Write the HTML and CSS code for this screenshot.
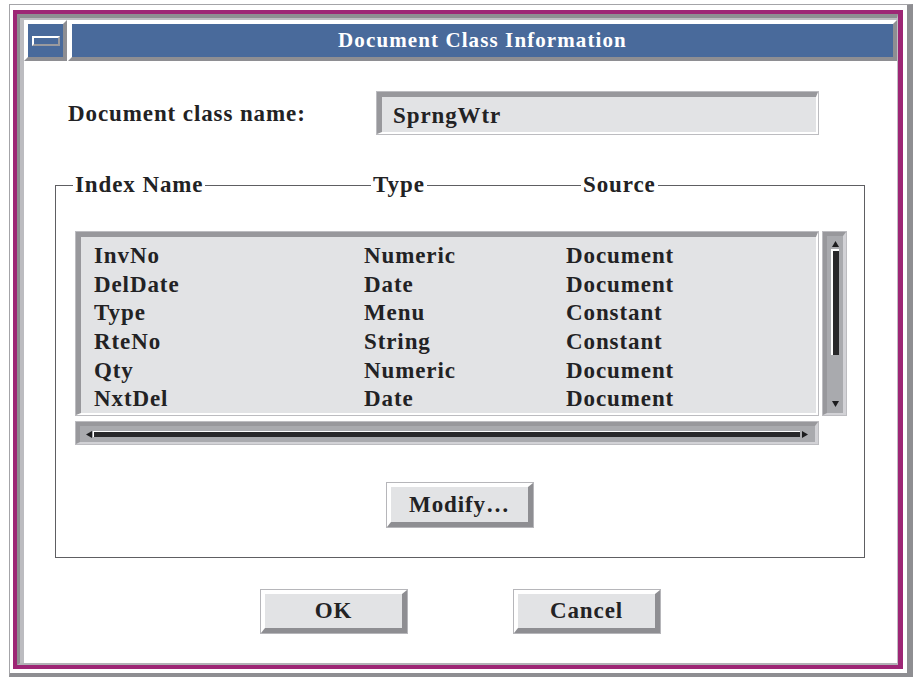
FILE: index.html
```html
<!DOCTYPE html>
<html lang="en">
<head>
<meta charset="utf-8">
<title>Document Class Information</title>
<link rel="stylesheet" href="styles.css">
</head>
<body>
<div class="screen">
  <div class="win">
    <div class="rim-white">
      <div class="rim-mag">
        <div class="rim-shade">
          <div class="rim-light">
            <div class="client">
              <header class="titlebar">
                <div class="menu-btn"><span class="menu-glyph"></span></div>
                <div class="title">Document Class Information</div>
              </header>

              <main class="content">
                <div class="name-row">
                  <span class="name-label">Document class name:</span>
                  <div class="field">SprngWtr</div>
                </div>

                <section class="group">
                  <div class="legend">
                    <div class="slot slot-name"><span>Index Name</span></div>
                    <div class="slot slot-type"><span>Type</span></div>
                    <div class="slot slot-src"><span>Source</span></div>
                  </div>

                  <div class="list-wrap">
                    <div class="list-line">
                      <div class="list">
                        <div class="row"><span>InvNo</span><span>Numeric</span><span>Document</span></div>
                        <div class="row"><span>DelDate</span><span>Date</span><span>Document</span></div>
                        <div class="row"><span>Type</span><span>Menu</span><span>Constant</span></div>
                        <div class="row"><span>RteNo</span><span>String</span><span>Constant</span></div>
                        <div class="row"><span>Qty</span><span>Numeric</span><span>Document</span></div>
                        <div class="row"><span>NxtDel</span><span>Date</span><span>Document</span></div>
                      </div>
                      <div class="vscroll">
                        <svg class="arrow" width="7" height="6" viewBox="0 0 7 6"><polygon points="3.5,0 7,6 0,6"/></svg>
                        <div class="vthumb"></div>
                        <svg class="arrow arrow-down" width="7" height="6" viewBox="0 0 7 6"><polygon points="0,0 7,0 3.5,6"/></svg>
                      </div>
                    </div>
                    <div class="hscroll">
                      <svg class="arrow" width="6" height="7" viewBox="0 0 6 7"><polygon points="0,3.5 6,0 6,7"/></svg>
                      <div class="hthumb"></div>
                      <svg class="arrow" width="6" height="7" viewBox="0 0 6 7"><polygon points="0,0 6,3.5 0,7"/></svg>
                    </div>
                  </div>

                  <div class="modify-line">
                    <button class="btn btn-modify" type="button">Modify…</button>
                  </div>
                </section>

                <div class="actions">
                  <button class="btn btn-ok" type="button">OK</button>
                  <button class="btn btn-cancel" type="button">Cancel</button>
                </div>
              </main>
            </div>
          </div>
        </div>
      </div>
    </div>
  </div>
</div>
</body>
</html>
```

FILE: styles.css
```css
* {
  box-sizing: border-box;
}

html, body {
  margin: 0;
  background: #ffffff;
}

body {
  font-family: "Liberation Serif", "Times New Roman", serif;
  font-weight: bold;
  font-size: 23px;
  letter-spacing: 0.9px;
  color: #222224;
}

.screen {
  width: 913px;
  height: 677px;
  padding: 4px 0 0 9px;
  overflow: hidden;
}

/* ---- window frame: nested bevel rims ---- */
.win {
  width: 904px;
  height: 673px;
  border-style: solid;
  border-width: 1px 6px 4px 1px;
  border-color: #a4a4a8 #8e8e92 #8e8e92 #a4a4a8;
  background: #ffffff;
}

.rim-white,
.rim-mag,
.rim-shade,
.rim-light,
.client {
  height: 100%;
}

.rim-white {
  border-style: solid;
  border-color: #ffffff;
  border-width: 5px 4px 4px 3px;
}

.rim-mag {
  border-style: solid;
  border-color: #9d2675;
  border-width: 4px 5px 4px 4px;
}

.rim-shade {
  border-style: solid;
  border-width: 4px 1px 2px 3px;
  border-color: #8e8e92 #bfbfc3 #b2b2b6 #8e8e92;
}

.rim-light {
  border-style: solid;
  border-width: 2px 0 0 4px;
  border-color: #bcbcc0;
}

.client {
  display: flex;
  flex-direction: column;
  background: #ffffff;
}

/* ---- title bar ---- */
.titlebar {
  display: flex;
  gap: 1px;
  height: 41px;
  flex: none;
}

.menu-btn,
.title {
  border-style: solid;
  border-width: 4px;
  border-color: #ffffff #8e8e92 #8e8e92 #ffffff;
  background: #496a9b;
}

.menu-btn {
  width: 43px;
  display: flex;
  align-items: center;
  justify-content: center;
}

.menu-glyph {
  display: block;
  width: 28px;
  height: 10px;
  border-style: solid;
  border-width: 2px;
  border-color: #ffffff #9a9a9e #9a9a9e #ffffff;
  background: #496a9b;
}

.title {
  flex: 1;
  display: flex;
  align-items: center;
  justify-content: center;
  color: #ffffff;
  font-size: 21px;
  letter-spacing: 1.1px;
  padding-bottom: 1px;
}

/* ---- dialog body ---- */
.content {
  display: flex;
  flex-direction: column;
}

.name-row {
  display: flex;
  align-items: center;
  margin-top: 31px;
  padding-left: 44px;
  height: 42px;
}

.name-label {
  width: 309px;
  padding-top: 2px;
}

.field,
.list {
  border-style: solid;
  border-width: 5px 2px 2px 5px;
  border-color: #98989c #ffffff #ffffff #98989c;
  box-shadow: 0 0 0 1px #bcbcc0;
  background: #e2e3e5;
}

.field {
  width: 441px;
  height: 42px;
  padding: 4px 0 0 11px;
  line-height: 30px;
}

/* ---- group box ---- */
.group {
  margin: 51px 0 0 31px;
  width: 810px;
  height: 373px;
  border: 1px solid #5e5e62;
  display: flex;
  flex-direction: column;
}

.legend {
  display: flex;
  align-items: center;
  height: 24px;
  margin-top: -13px;
  padding-left: 17px;
}

.slot span {
  background: #ffffff;
  padding: 0 2px;
}

.slot-name {
  width: 298px;
}

.slot-type {
  width: 210px;
}

.list-wrap {
  margin: 35px 0 0 20px;
}

.list-line {
  display: flex;
  gap: 5px;
}

.list {
  width: 742px;
  height: 183px;
  padding: 5px 0 0 13px;
  overflow: hidden;
}

.row {
  display: grid;
  grid-template-columns: 270px 202px 1fr;
  height: 28.7px;
  line-height: 28.7px;
}

.vscroll,
.hscroll {
  border-style: solid;
  border-color: #98989c #d2d2d6 #d2d2d6 #98989c;
  background: #a9aaae;
  box-shadow: 0 0 0 1px #bcbcc0;
}

.vscroll {
  width: 23px;
  height: 183px;
  border-width: 4px 3px 2px 4px;
  display: flex;
  flex-direction: column;
  align-items: center;
  padding: 5px 0 6px;
}

.arrow {
  display: block;
  fill: #1c1c1e;
  flex: none;
}

.vthumb {
  margin-top: 2px;
  width: 8px;
  height: 106px;
  background: #28282a;
  border-left: 2px solid #ffffff;
  border-top: 2px solid #ffffff;
}

.arrow-down {
  margin-top: auto;
}

.hscroll {
  margin-top: 7px;
  width: 742px;
  height: 22px;
  border-width: 4px 3px 2px 4px;
  display: flex;
  align-items: center;
  padding-left: 6px;
}

.hthumb {
  margin: 0 2px 0 1px;
  width: 707px;
  height: 6px;
  background: #28282a;
  border-left: 1px solid #ffffff;
  border-top: 1px solid #ffffff;
}

/* ---- push buttons ---- */
.btn {
  font: inherit;
  letter-spacing: inherit;
  color: inherit;
  background: #e2e3e5;
  border-style: solid;
  border-width: 4px 5px 5px 4px;
  border-color: #ffffff #8e8e92 #8e8e92 #ffffff;
  box-shadow: 0 0 0 1px #b6b6ba;
  padding: 0;
  margin: 0;
}

.modify-line {
  display: flex;
  justify-content: center;
  margin-top: 39px;
}

.btn-modify {
  width: 146px;
  height: 44px;
}

.actions {
  display: flex;
  justify-content: center;
  gap: 107px;
  margin-top: 32px;
}

.btn-ok,
.btn-cancel {
  width: 146px;
  height: 43px;
}
```
